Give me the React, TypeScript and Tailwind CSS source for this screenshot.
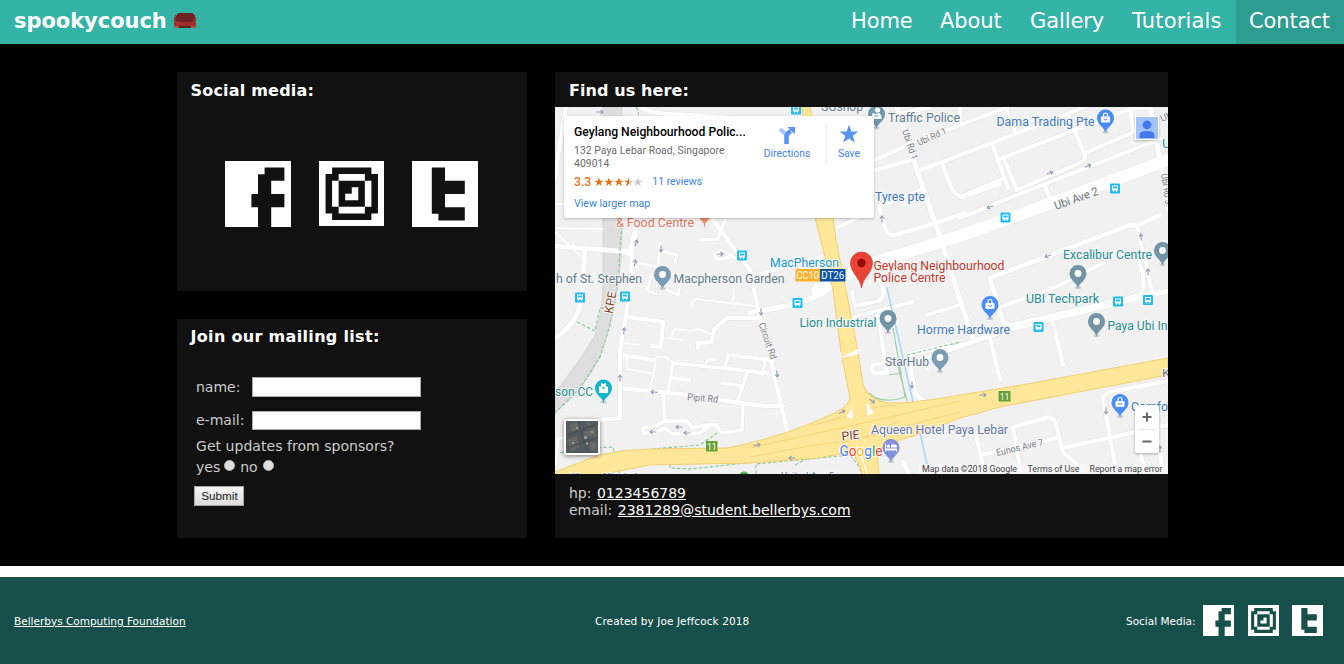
import React from "react";

const ICONS = {
  facebook:
    "M0 0H10V10H7V7H9V5H7V3H9V1H6V2H5V5H4V7H5V10H0Z",
  instagram:
    "M0 0H10V10H0Z M2 1V2H1V8H2V9H8V8H9V2H8V1Z M3 2H7V3H8V7H7V8H3V7H2V3H3Z M3 3V7H7V3Z M5 4H6V6H4V5H5Z",
  twitter: "M0 0H10V10H0Z M3 1V8H4V9H8V7H5V5H8V3H5V1Z",
};

function PixelIcon({ name, className }: { name: keyof typeof ICONS; className: string }) {
  return (
    <svg viewBox="0 0 10 10" className={className} fill="#fff" fillRule="evenodd" aria-label={name}>
      <path d={ICONS[name]} />
    </svg>
  );
}

function Couch() {
  return (
    <svg width="22" height="16" viewBox="0 0 22 16" shapeRendering="crispEdges">
      <path d="M4 0H19V1H20V2H21V4H22V15H0V4H1V2H3V1H4Z" fill="#a52d2b" />
      <path d="M4 0H19V1H20V2H21V5H20V7H19V9H3V8H2V3H3V1H4Z" fill="#6d2524" />
      <path d="M0 13H5V15H0ZM17 13H22V15H17Z" fill="#a45a3c" />
      <path d="M5 13H17V15H5Z" fill="#4b2b23" />
    </svg>
  );
}

const ROADS: [string, number][] = [
  ["M566 107L558 155L555 178", 4],
  ["M555 204H566", 3],
  ["M640 107Q652 114 672 114L735 118", 4],
  ["M555 246L618 251H630L638 220", 4.5],
  ["M585 250L582 292Q580 310 575 318Q567 331 555 338", 4.5],
  ["M638 220L632 250L631 285L620 350V418L600 420", 4],
  ["M618 251Q632 252 634 265L638 268", 3],
  ["M638 263L658 267M660 243L657 285M660 251L677 255L675 263M652 274L647 290L656 294M667 290L678 295L680 284", 3],
  ["M713 220L750 270L760 318L768 347L789 440", 4],
  ["M725 220L718 239L700 240M735 258L722 250L714 255L718 260L730 257", 3],
  ["M750 313L790 305Q815 300 833 286", 5],
  ["M757 275L795 264L826 256", 4],
  ["M628 317L663 322L661 347L652 346M622 355L653 360M620 388L690 395L740 403L765 406H783", 4],
  ["M668 392L673 363L768 373M672 378L690 380M725 367L728 355L773 360M747 373L743 385L737 403M722 383L742 386", 3.5],
  ["M698 348V343L712 342L714 330L727 318H760", 4],
  ["M663 394L665 421M643 428L655 426L665 421H687L692 428L708 425L716 425L722 433L742 430L743 403M643 428V433L655 433L665 428L672 434L700 433L708 427", 3.5],
  ["M706 363L708 360H714M555 466L558 438H565", 3],
  ["M750 371L763 374L765 360", 3],
  ["M832 230L862 216M872 171L911 160", 4],
  ["M897 107L918 173L941 240L960 300L973 338", 5],
  ["M875 160L912 143L960 125L1008 107M917 171L943 162L960 155L1067 114L1085 107M900 114L930 107", 4],
  ["M997 160L1130 109L1150 107M992 143L1008 188M1003 157L1017 190M1005 107L1015 131M960 107V122", 3.8],
  ["M1017 190L1080 163Q1087 160 1084 153L1068 114M1085 153L1150 125M1130 107L1133 130", 4],
  ["M960 218L1017 195L1160 139M960 197L1004 178M1045 186L1052 204", 4],
  ["M943 166L951 187Q954 194 962 197L1000 184", 4],
  ["M879 207L885 228Q888 236 895 235L933 224L965 213M879 207L920 190", 4],
  ["M1150 107L1160 160L1168 210", 5],
  ["M990 278L1122 228Q1130 224 1137 226L1160 215M990 278L1003 322L1010 325", 4.5],
  ["M1137 226L1152 291M1136 254Q1145 274 1143 285Q1144 293 1136 296L1010 325M1000 307L1058 286L1103 263", 3.8],
  ["M920 360L960 346L1010 329L1168 291", 5],
  ["M990 338L1000 380M1053 322L1063 365", 4],
  ["M883 260L890 278L905 285L940 270M852 292L855 306L878 301Q886 297 883 287L878 278L869 282M850 318L912 302M927 315L962 304M878 315L887 373H875Q869 370 873 365L884 363", 3.8],
  ["M907 355L950 345M908 355L914 388Q917 400 927 402", 5],
  ["M1115 465L1103 399Q1103 394 1110 392L1168 381M981 455L1057 438M1063 448L1168 425M1013 427L1048 417Q1054 417 1056 425L1063 452L1085 472M1013 427L1021 474M977 432V440L984 470M903 462L909 474M1140 450L1145 474M1158 440L1163 474", 4],
  ["M928 370L920 360", 3],
];

const MINOR =
  "M691 305L695 299L755 306L757 302M733 304L734 284M671 338L674 329L690 331L700 329L707 333L712 334M669 338L682 340M624 343L640 345M627 358V369L654 374L656 357H666L672 362M654 374L650 388M555 228L603 229M555 232L585 260";

const GREEN =
  "M636 107Q642 113 632 128M622 220L620 250L618 285L610 325L600 357L580 388L555 413M577 322L595 331L600 308H606M560 453L575 448L613 447L620 475M652 449L700 445L717 433M652 449H670L670 468L690 469L755 462M756 474V464L850 455Q859 465 862 474M907 355L960 342M815 448L818 458M795 465L820 452";

const PINS: { x: number; y: number; c: string; kind: "dot" | "bag" | "bed" | "civic" | "police" }[] = [
  { x: 662.5, y: 274.5, c: "#7a9bb0", kind: "dot" },
  { x: 876.5, y: 114, c: "#6f98ad", kind: "police" },
  { x: 1105.5, y: 118, c: "#4b8df8", kind: "bag" },
  { x: 1078, y: 273.5, c: "#7394a5", kind: "dot" },
  { x: 1162.5, y: 250.5, c: "#7394a5", kind: "dot" },
  { x: 888, y: 318.5, c: "#7394a5", kind: "dot" },
  { x: 990, y: 304.5, c: "#4b8df8", kind: "bag" },
  { x: 1096.5, y: 321.5, c: "#7394a5", kind: "dot" },
  { x: 940, y: 357.5, c: "#7b9db3", kind: "dot" },
  { x: 603.5, y: 388, c: "#12b5cb", kind: "civic" },
  { x: 1120, y: 402.5, c: "#4b8df8", kind: "bag" },
  { x: 891, y: 447.5, c: "#8191db", kind: "bed" },
];

function Pin({ x, y, c, kind }: (typeof PINS)[number]) {
  return (
    <g transform={`translate(${x} ${y})`}>
      <ellipse cx="0" cy="14" rx="3" ry="1.5" fill="#c9cccf" />
      <path d="M0 15C-1 9-8.5 7-8.5 0A8.5 8.5 0 0 1 8.5 0C8.5 7 1 9 0 15Z" fill={c} />
      {kind === "dot" && <circle r="3.4" fill="#fff" />}
      {kind === "bag" && (
        <g fill="none" stroke="#fff">
          <path d="M-4-1H4V4H-4Z" fill="#fff" />
          <path d="M-2-1V-3A2 2 0 0 1 2-3V-1" strokeWidth="1.2" />
          <path d="M-2 .8Q0 3.300 2 .8" stroke={c} />
        </g>
      )}
      {kind === "bed" && (
        <g fill="#fff">
          <path d="M-6-4H-5V1H6V4H5V3H-5V4H-6ZM0-3H4Q6-3 6-1V0H0Z" />
          <circle cx="-2.7" cy="-1.3" r="1.6" />
        </g>
      )}
      {kind === "civic" && (
        <g>
          <path d="M-4.500-1.500H-2.500V-5H-1V-4H1V-5H2.500V-1.500H4.500V5H-4.500Z" fill="#fff" />
          <path d="M-1-1H1V1H-1Z" fill={c} />
        </g>
      )}
      {kind === "police" && (
        <g fill="#fff">
          <circle cx="1" cy="-4" r="2.6" />
          <path d="M-5 4L-4-1L-1 0L3-1L5 2V5H-5Z" />
          <path d="M-2 2H2" stroke={c} />
        </g>
      )}
    </g>
  );
}

const STOPS: [number, number][] = [
  [796, 109.5], [742, 255.5], [580, 297.5], [625, 296.5], [797.5, 303], [1115, 188.5],
  [1005.5, 217.5], [1118, 301.5], [1148, 300], [1038.5, 327],
];

const ARROWS: [number, number, number][] = [
  [600, 112, 0], [636, 243, -70], [635, 263, -80], [661, 249, 90], [720, 254, 0], [624, 331, -85], [620, 378, -90],
  [654, 392, 185], [679, 427, 180], [653, 432, 180], [687, 433, 180], [757, 445, -10], [761, 312, 90], [777, 374, 85],
  [792, 458, 180], [882, 219, -90], [990, 207, 160], [1050, 173, -22], [1088, 166, -22], [1048, 256, 160],
  [1141, 237, -95], [1148, 272, -95], [872, 401, 35], [842, 412, -25], [912, 385, 90], [983, 395, -5], [1106, 411, 90],
  [1160, 449, -90],
];

interface Label {
  t: string;
  x: number;
  y: number;
  w: number;
  c: string;
  s?: number;
  r?: number;
}

const SLATE = "#5f7b8c";
const TEAL = "#258d94";
const BLUE = "#4279b8";

const LABELS: Label[] = [
  { t: "SGshop", x: 821, y: 110.5, w: 42, c: SLATE },
  { t: "Traffic Police", x: 888, y: 121.5, w: 72, c: SLATE },
  { t: "Dama Trading Pte", x: 996.5, y: 126, w: 98, c: BLUE },
  { t: "Tyres pte", x: 875, y: 200.5, w: 50, c: BLUE },
  { t: "& Food Centre", x: 616, y: 226.5, w: 78, c: "#e0775b" },
  { t: "h of St. Stephen", x: 556, y: 282.5, w: 86, c: SLATE },
  { t: "Macpherson Garden", x: 673.5, y: 282.5, w: 111, c: SLATE },
  { t: "MacPherson", x: 770, y: 266.5, w: 69, c: "#1c9acb" },
  { t: "Geylang Neighbourhood", x: 873.5, y: 269.5, w: 131, c: "#c5372c" },
  { t: "Police Centre", x: 873.5, y: 281.7, w: 72, c: "#c5372c" },
  { t: "Excalibur Centre", x: 1063, y: 258.5, w: 89, c: TEAL },
  { t: "UBI Techpark", x: 1026, y: 302.7, w: 73, c: TEAL },
  { t: "Lion Industrial", x: 799.5, y: 326.5, w: 77, c: TEAL },
  { t: "Horme Hardware", x: 917, y: 333.5, w: 93, c: BLUE },
  { t: "Paya Ubi In", x: 1107.5, y: 329.5, w: 60, c: TEAL },
  { t: "StarHub", x: 885, y: 365.5, w: 44, c: SLATE },
  { t: "son CC", x: 555, y: 396, w: 38, c: TEAL },
  { t: "Comfo", x: 1131, y: 411, w: 37, c: BLUE },
  { t: "Aqueen Hotel Paya Lebar", x: 871, y: 434, w: 137, c: "#6576a5" },
  { t: "Ubi Ave 2", x: 1056, y: 210, w: 46, c: "#6d777d", s: 11.5, r: -20 },
  { t: "Ubi Rd 1", x: 919, y: 146, w: 31, c: "#7d8487", s: 9.5, r: -24 },
  { t: "Ubi Rd 1", x: 902, y: 131, w: 31, c: "#7d8487", s: 9.5, r: 71 },
  { t: "Ubi Rd 3", x: 1161, y: 174, w: 31, c: "#7d8487", s: 9.5, r: 82 },
  { t: "Ubi", x: 1162, y: 122, w: 14, c: "#7d8487", s: 9.5, r: -24 },
  { t: "U", x: 1162, y: 148, w: 9, c: "#1c9acb", s: 12 },
  { t: "Circuit Rd", x: 758.5, y: 324, w: 38, c: "#7d8487", s: 9.5, r: 71 },
  { t: "Pipit Rd", x: 687, y: 400, w: 31, c: "#7d8487", s: 9.5, r: 5 },
  { t: "Eunos Ave 7", x: 997, y: 456, w: 48, c: "#7d8487", s: 9.5, r: -13 },
  { t: "KPE", x: 612.5, y: 314, w: 22, c: "#83451f", s: 12, r: -80 },
  { t: "PIE", x: 842, y: 440.5, w: 18, c: "#83451f", s: 12, r: -6 },
  { t: "K", x: 1162, y: 377, w: 8, c: "#6d777d", s: 11.5 },
  { t: "Upper Aljunied", x: 572, y: 479.5, w: 65, c: "#5f7b8c", s: 9.5 },
  { t: "United Ave 5", x: 781, y: 478.5, w: 53, c: "#5f7b8c", s: 9.5 },
];

function MapDrawing() {
  return (
    <svg
      viewBox="555 107 613 367"
      className="block h-full w-full"
      fontFamily="Roboto, sans-serif"
    >
      <rect x="555" y="107" width="613" height="367" fill="#f1f1f1" />
      <path d="M603 107H622V250L618 285Q614 315 600 357Q585 388 555 413V392Q580 362 595 335Q603 310 603 285Z" fill="#dedede" stroke="#cfcfcf" strokeWidth=".7" />
      <path d="M869 393Q881 405 905 397L893 328M889 375L902 373M897 362L907 401" fill="none" stroke="#9dcfa9" strokeWidth="1.2" />
      <g fill="none" strokeLinejoin="round" strokeLinecap="round">
        {ROADS.map(([d, w], i) => (
          <path key={i} d={d} stroke="#e6e7e8" strokeWidth={w + 1.2} />
        ))}
        <path d="M817 290L850 273L873 263L960 236L1060 200L1168 160" stroke="#e6e7e8" strokeWidth="13" />
        {ROADS.map(([d, w], i) => (
          <path key={i} d={d} stroke="#fff" strokeWidth={w} />
        ))}
        <path d={MINOR} stroke="#fff" strokeWidth="1.5" />
        <path d="M817 290L850 273L873 263L960 236L1060 200L1168 160" stroke="#fff" strokeWidth="12" />
        <path d="M887 288L913 402M920 432L927 465" stroke="#a8d8f8" strokeWidth="1.6" />
        <path d={GREEN} stroke="#86c894" strokeWidth="1.1" strokeDasharray="3.5 2" strokeLinecap="butt" />
      </g>
      <path
        d="M802 107H810L833 218L836 240L846 290L858 352L863 385Q869 398 880 401Q892 407 960 395L1027 384L1168 358V375L1000 407L960 418L917 435Q886 443 877 452L879 476H862Q860 460 850 452Q842 454 817 458L750 463L650 465L593 476L553 476V473Q580 462 600 455Q625 449 650 449L727 448Q765 441 807 425L837 412Q849 405 850 398L841 352L833 290L825 257L815 218Z"
        fill="#ffe79a"
        stroke="#f3cf72"
      />
      <g fill="none" stroke="#f3cf72" strokeWidth=".8">
        <path d="M750 448L850 426L960 401M750 457L815 445L850 441L960 412M877 430L900 421M810 426L848 416M870 408L897 405" />
      </g>
      <path d="M847 417L852 409V418ZM867 403L873 413L868 415ZM856 445L861 455L867 474M841 357L858 354V349M841 357V352" fill="#fff" stroke="#fff" />

      {ARROWS.map(([x, y, r], i) => (
        <path key={i} transform={`translate(${x} ${y}) rotate(${r})`} d="M-3.5 0H3M.5-2L3 0L.5 2" fill="none" stroke="#98a0b3" strokeWidth="1.2" />
      ))}

      {STOPS.map(([x, y], i) => (
        <g key={i} transform={`translate(${x} ${y})`}>
          <rect x="-5" y="-5" width="10" height="10" rx="1" fill="#1fbcf5" />
          <path d="M-3-3H3V2H2V3.5H1V2H-1V3.5H-2V2H-3Z" fill="#fff" />
          <path d="M-2-2H2V0H-2Z" fill="#1fbcf5" />
        </g>
      ))}

      {PINS.map((p, i) => (
        <Pin key={i} {...p} />
      ))}
      <path d="M699 218H710L705.5 223L704.5 228L703.5 223Z" fill="#ef8a68" />
      <circle cx="744" cy="476.5" r="5" fill="#4caf50" />

      <path d="M861.5 288C860 277 850.5 273 850.5 263A11 11 0 0 1 872.5 263C872.5 273 863 277 861.5 288Z" fill="#e84335" stroke="#c5372c" strokeWidth=".6" />
      <circle cx="861.5" cy="263" r="4.2" fill="#960a0a" />

      <g textAnchor="middle" fill="#fff">
        <path d="M795.5 269H820V281.500H795.500Z" fill="#fcb128" />
        <path d="M820 269H845.500V281.500H820Z" fill="#0e54a6" />
        <text x="807.8" y="279.3" fontSize="10.5" textLength="22.500" lengthAdjust="spacingAndGlyphs">CC10</text>
        <text x="832.8" y="279.3" fontSize="10.5" textLength="23" lengthAdjust="spacingAndGlyphs">DT26</text>
        <path d="M706 441H717.500V451.500H706ZM998.500 391H1010.500V401.500H998.500Z" fill="#689f38" />
        <text x="711.7" y="449.500" fontSize="8.500">11</text>
        <text x="1004.500" y="399.500" fontSize="8.500">11</text>
      </g>

      {LABELS.map((l, i) => (
        <text
          key={i}
          x={l.x}
          y={l.y}
          fontSize={l.s ?? 12.3}
          fill={l.c}
          stroke="#f6f6f6"
          strokeWidth="2"
          strokeLinejoin="round"
          paintOrder="stroke"
          textLength={l.w}
          lengthAdjust="spacingAndGlyphs"
          transform={l.r ? `rotate(${l.r} ${l.x} ${l.y})` : undefined}
        >
          {l.t}
        </text>
      ))}

      <text x="839.5" y="456" fontSize="13.8" textLength="43" lengthAdjust="spacingAndGlyphs" stroke="#fff" strokeWidth="1.5" paintOrder="stroke">
        <tspan fill="#4285f4">G</tspan>
        <tspan fill="#ea4335">o</tspan>
        <tspan fill="#fbbc05">o</tspan>
        <tspan fill="#4285f4">g</tspan>
        <tspan fill="#34a853">l</tspan>
        <tspan fill="#ea4335">e</tspan>
      </text>
      <rect x="918" y="464" width="250" height="10" fill="#f5f5f5" opacity=".75" />
      <g fontSize="8.8" fill="#444">
        <text x="922" y="472" textLength="95">Map data ©2018 Google</text>
        <text x="1027.500" y="472" textLength="52">Terms of Use</text>
        <text x="1089.500" y="472" textLength="73">Report a map error</text>
      </g>
    </svg>
  );
}

function Star({ className, fill }: { className: string; fill: string }) {
  return (
    <svg viewBox="0 0 20 20" className={className}>
      <path d="M10 .8L12.400 7.500H19.500L13.800 11.700L15.900 18.600L10 14.400L4.100 18.600L6.200 11.700L.5 7.500H7.600Z" fill={fill} />
    </svg>
  );
}

function PlaceCard() {
  return (
    <div className="absolute left-[9px] top-[9px] flex h-[102px] w-[310px] rounded-[2px] bg-white font-['Roboto',sans-serif] shadow-[0_1px_3px_rgba(0,0,0,0.25)]">
      <div className="w-[194px] pl-[10px] pt-[7px] whitespace-nowrap">
        <div className="text-[12.2px] font-medium leading-[18px] text-black">Geylang Neighbourhood Polic...</div>
        <div className="mt-[4px] text-[10.4px] leading-[12.5px] tracking-[0.05px] text-[#6b6b6b]">
          132 Paya Lebar Road, Singapore
          <br />
          409014
        </div>
        <div className="mt-[5px] flex h-[14px] items-center text-[12.2px] font-medium text-[#e7711b]">
          3.3
          <div className="ml-[3px] flex">
            <Star className="size-[9.800px]" fill="#e7711b" />
            <Star className="size-[9.800px]" fill="#e7711b" />
            <Star className="size-[9.800px]" fill="#e7711b" />
            <svg viewBox="0 0 20 20" className="size-[9.800px]">
              <path d="M10 .8L12.400 7.500H19.500L13.800 11.700L15.900 18.600L10 14.400L4.100 18.600L6.200 11.700L.5 7.500H7.600Z" fill="#ccc" />
              <path d="M10 .8V14.400L4.100 18.600L6.200 11.700L.5 7.500H7.600Z" fill="#e7711b" />
            </svg>
            <Star className="size-[9.800px]" fill="#ccc" />
          </div>
          <span className="ml-[9px] text-[10.5px] font-normal text-[#3a84df]">11 reviews</span>
        </div>
        <div className="mt-[8px] text-[10.6px] leading-[13px] text-[#3a84df]">View larger map</div>
      </div>
      <div className="flex w-[58px] flex-col items-center pt-[9px]">
        <svg width="18" height="20" viewBox="0 0 18 20">
          <path d="M2 4L8.500 10" stroke="#a9c9fb" strokeWidth="4" />
          <path d="M8.500 19V12Q8.500 8 13 6" fill="none" stroke="#5a94f3" strokeWidth="4.500" />
          <path d="M9.500 2H17V9.500Z" fill="#5a94f3" />
        </svg>
        <span className="mt-[2px] text-[10.4px] leading-[14px] text-[#4285f4]">Directions</span>
      </div>
      <div className="ml-[10px] mt-[9px] h-[40px] w-px bg-[#ececec]" />
      <div className="flex w-[44px] flex-col items-center pt-[8px]">
        <Star className="size-[20px]" fill="#5a94f3" />
        <span className="mt-[3px] text-[10.4px] leading-[14px] text-[#4285f4]">Save</span>
      </div>
    </div>
  );
}

function Satellite() {
  return (
    <div className="absolute left-[9px] top-[312px] size-[36px] rounded-[2px] border-2 border-white bg-[#535b5e] shadow-[0_1px_4px_rgba(0,0,0,0.5)]">
      <svg viewBox="0 0 32 32" className="size-full">
        <path d="M3 3L12 1L15 9L6 12ZM17 11L29 7L31 14L20 17ZM2 18L11 15L14 26L5 30Z" fill="#666866" />
        <path d="M0 14L32 3M12 0L22 32M0 27L32 17" stroke="#495254" strokeWidth="1.5" />
        <path d="M18 15H21V18H18ZM20 21H22V24H20ZM10 6H12V8H10ZM6 21H8V23H6ZM25 10H27V12H25Z" fill="#949794" />
        <path d="M24 20L31 22L29 30L24 28ZM18 2L24 1L25 5Z" fill="#696b69" />
      </svg>
    </div>
  );
}

function MapPanel() {
  return (
    <div className="relative h-[367px] w-[613px] overflow-hidden">
      <MapDrawing />
      <PlaceCard />
      <div className="absolute left-[580px] top-[9px] flex size-[24px] justify-center border border-white bg-[#a1c3fa] shadow-[0_1px_2px_rgba(0,0,0,0.25)]">
        <svg viewBox="0 0 21 21" className="size-[22px]" fill="#4378e8">
          <circle cx="10.500" cy="7.500" r="4.200" />
          <path d="M3.500 20V17Q4 13.500 8 13.500H13Q17 13.500 17.500 17V20Z" />
        </svg>
      </div>
      <Satellite />
      <div className="absolute left-[580px] top-[298px] h-[48px] w-[24px] rounded-[2px] bg-white shadow-[0_1px_3px_rgba(0,0,0,0.3)]">
        <svg viewBox="0 0 24 48" className="h-[48px] w-[24px]" fill="none">
          <path d="M7.500 12H16.500M12 7.500V16.500M7.500 36.500H16.500" stroke="#666" strokeWidth="2" />
          <path d="M3 24.500H21" stroke="#e6e6e6" />
        </svg>
      </div>
    </div>
  );
}

function Header() {
  return (
    <header className="flex h-[44px] bg-[#34b3a7] text-[21px] leading-[42px] text-white">
      <div className="flex flex-1 pl-[14px] font-bold">
        <span className="w-[153px] whitespace-nowrap tracking-[-0.05px]">spookycouch</span>
        <div className="ml-[7px] mt-[13px]">
          <Couch />
        </div>
      </div>
      <nav className="flex whitespace-nowrap tracking-[-0.1px]">
        <a className="w-[89px] pl-[14px]">Home</a>
        <a className="w-[90px] pl-[14px]">About</a>
        <a className="w-[102px] pl-[14px]">Gallery</a>
        <a className="w-[118px] pl-[14px] tracking-[0.15px]">Tutorials</a>
        <a className="w-[108px] bg-[#2d9c91] pl-[13px]">Contact</a>
      </nav>
    </header>
  );
}

export default function App() {
  return (
    <div className="h-[664px] w-[1344px] overflow-hidden bg-white font-['DejaVu_Sans',sans-serif]">
      <Header />
      <main className="flex h-[522px] gap-[28px] bg-black pl-[177px] pt-[28px] text-[14px] text-[#ccc]">
        <div className="flex w-[350px] flex-col gap-[28px]">
          <section className="h-[219px] bg-[#111]">
            <h2 className="h-[88.500px] pl-[13.500px] pt-[9px] text-[16px] font-bold leading-[20px] tracking-[0.2px] text-white">Social media:</h2>
            <div className="flex gap-[27.700px] pl-[48px]">
              <PixelIcon name="facebook" className="size-[66px]" />
              <PixelIcon name="instagram" className="size-[65.500px]" />
              <PixelIcon name="twitter" className="size-[66px]" />
            </div>
          </section>
          <section className="h-[219px] bg-[#111]">
            <h2 className="pl-[13.500px] pt-[8px] text-[16px] font-bold leading-[20px] tracking-[0.32px] text-white">Join our mailing list:</h2>
            <form className="pl-[19px] pt-[30px]">
              <div className="flex h-[20px] items-center">
                <label className="w-[56px]">name:</label>
                <input className="h-[20px] w-[169px] border border-[#a9a9a9] bg-white" />
              </div>
              <div className="mt-[14px] flex h-[19px] items-center">
                <label className="w-[56px] whitespace-nowrap">e-mail:</label>
                <input className="h-[19px] w-[169px] border border-[#a9a9a9] bg-white" />
              </div>
              <div className="mt-[6px] leading-[20px] tracking-[0.04px]">Get updates from sponsors?</div>
              <div className="flex h-[21px] items-center pt-[2px]">
                yes
                <span className="mb-[4px] ml-[4px] size-[11px] rounded-full border border-[#bbb] bg-[#dedede]" />
                <span className="ml-[5px]">no</span>
                <span className="mb-[4px] ml-[5px] size-[11px] rounded-full border border-[#bbb] bg-[#dedede]" />
              </div>
              <button
                type="button"
                className="-ml-[2px] mt-[9px] block h-[20px] w-[50px] border border-[#a6a6a6] bg-gradient-to-b from-[#f4f4f4] to-[#dcdcdc] pl-px font-['Liberation_Sans',sans-serif] text-[11.700px] leading-[18px] text-[#222]"
              >
                Submit
              </button>
            </form>
          </section>
        </div>
        <section className="h-[466px] w-[613px] bg-[#111]">
          <h2 className="h-[35px] pl-[14px] pt-[9px] text-[16px] font-bold leading-[20px] tracking-[0.1px] text-white">Find us here:</h2>
          <MapPanel />
          <div className="pl-[14px] pt-[11px] leading-[17px]">
            <div>
              hp: <a className="ml-px text-white underline">0123456789</a>
            </div>
            <div>
              email: <a className="ml-px text-white underline">2381289@student.bellerbys.com</a>
            </div>
          </div>
        </section>
      </main>
      <footer className="mt-[11px] flex h-[87px] items-center bg-[#17504b] text-[10.500px] text-white">
        <a className="w-[581px] pl-[14px] pt-[2px] underline">Bellerbys Computing Foundation</a>
        <div className="w-[531px] pl-[14px] pt-[2px] tracking-[0.1px]">Created by Joe Jeffcock 2018</div>
        <div className="flex items-center pl-[14px]">
          <span className="w-[77px] whitespace-nowrap pt-[2px]">Social Media:</span>
          <div className="flex gap-[13.500px] pb-px">
            <PixelIcon name="facebook" className="size-[31px]" />
            <PixelIcon name="instagram" className="size-[31px]" />
            <PixelIcon name="twitter" className="size-[31px]" />
          </div>
        </div>
      </footer>
    </div>
  );
}
